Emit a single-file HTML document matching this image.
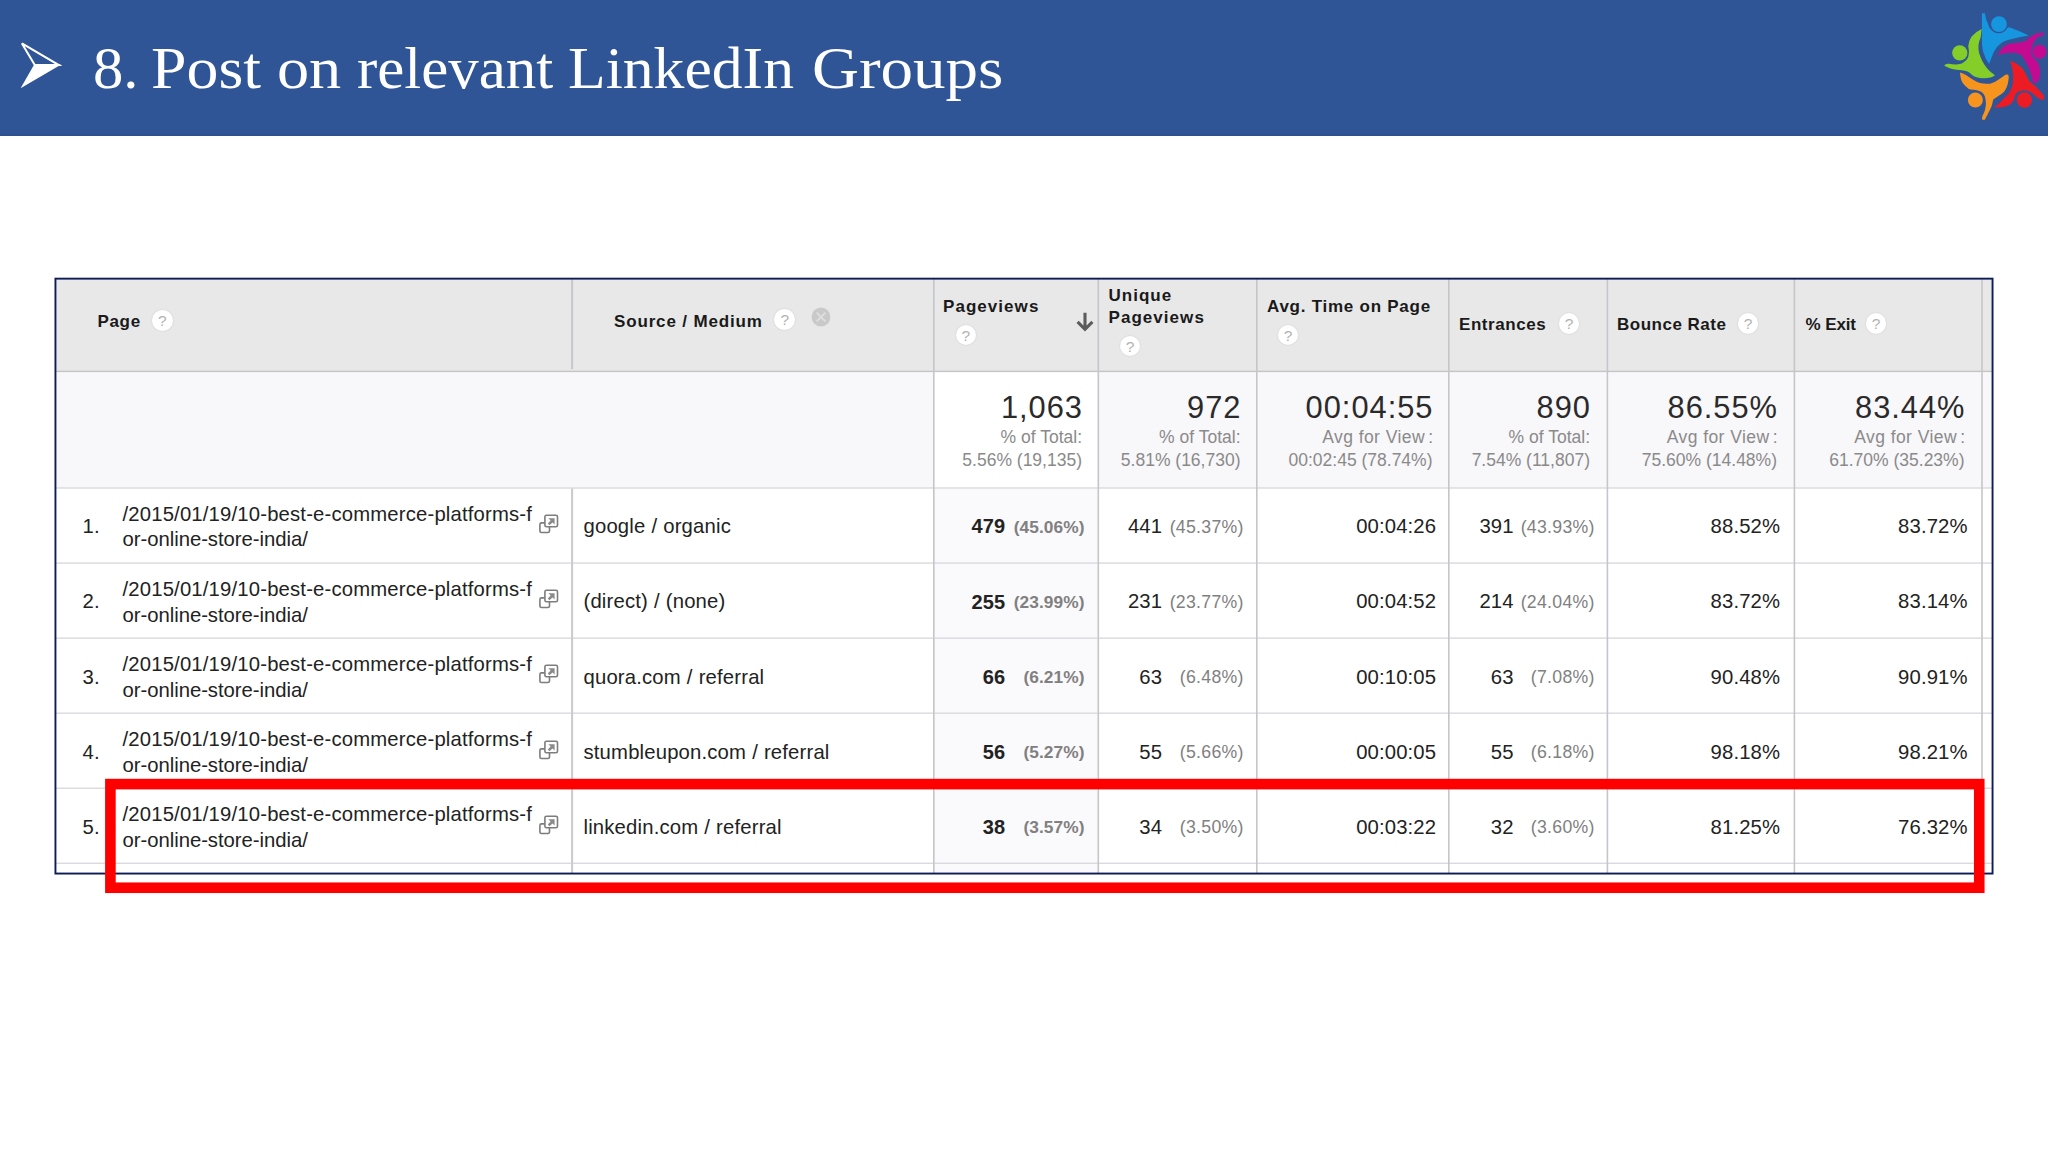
<!DOCTYPE html>
<html lang="en"><head><meta charset="utf-8"><title>8. Post on relevant LinkedIn Groups</title>
<style>
html,body{margin:0;padding:0;background:#fff}
body{width:2048px;height:1152px;position:relative;overflow:hidden;font-family:"Liberation Sans",Arial,sans-serif}
body>div,body>svg{position:absolute;white-space:nowrap}
.title{font-family:"Liberation Serif","Times New Roman",serif}
.title span{position:absolute;top:0;transform-origin:0 0;white-space:nowrap}
.h{font-weight:bold;color:#1a1a1a}
.d{color:#222}
.p{color:#808080}
.big{color:#2a2a2a}
.sub{color:#8a8a8a}
.q{border-radius:50%;background:#fff;color:#b2b2b2;font-size:15.5px;font-weight:normal;text-align:center;box-shadow:0 0 2px rgba(0,0,0,.13)}
</style></head><body>
<div style="left:0px;top:0px;width:2048px;height:136px;background:#2f5597;"></div>
<div style="left:0;top:133px;width:2048px;height:3px;background:linear-gradient(#2f5597,#2b4f8f)"></div>
<svg style="left:18px;top:38px" width="48" height="54" viewBox="18 38 48 54">
<polygon points="21.9,43.4 58.8,65.1 34.8,65.1" fill="none" stroke="#fff" stroke-width="2" stroke-linejoin="miter"/>
<polygon points="20.6,88.2 34.2,64.6 61.2,64.6" fill="#fff"/>
</svg>
<div class="title" style="left:0;top:34.16px;width:1100px;height:70px;font-size:58.5px;line-height:70px;color:#fff"><span style="left:93.1px;transform:scaleX(1.0368)">8.</span> <span style="left:151.4px;transform:scaleX(1.0909)">Post</span> <span style="left:276.6px;transform:scaleX(1.0982)">on</span> <span style="left:357.0px;transform:scaleX(1.0417)">relevant</span> <span style="left:568.4px;transform:scaleX(1.0538)">LinkedIn</span> <span style="left:812.0px;transform:scaleX(1.1113)">Groups</span></div>
<svg style="left:1936px;top:4px" width="112" height="124" viewBox="0 0 1041 1152">
<path fill="#1696de" d="M427,86 L454,86 Q462,150 498,223 Q530,268 580,270 Q630,268 665,215 Q700,215 723,233 Q800,262 861,292 Q780,305 723,321 Q665,335 625,351 Q585,375 567,400 Q540,435 527,469 Q508,520 493,557 Q455,505 437,440 Q425,390 427,331 Z"/>
<path fill="#85cd29" d="M424,233 Q420,275 415,312 Q398,350 395,380 Q392,420 400,454 Q412,495 429,527 Q470,610 548,662 Q520,688 440,690 Q370,690 330,655 Q300,622 240,616 Q140,612 76,574 Q90,550 120,556 Q190,570 240,552 Q285,530 300,490 Q312,440 300,390 Q305,340 331,302 Q370,258 424,233 Z"/>
<path fill="#f7941d" d="M223,637 Q250,645 282,662 Q310,682 341,701 Q375,722 410,735 Q455,745 503,740 Q545,730 576,706 Q615,680 645,657 L670,655 Q680,672 674,700 Q672,730 665,750 Q655,785 635,814 Q610,840 576,858 L532,887 Q525,920 518,946 Q500,990 478,1029 Q465,1055 454,1075 L429,1075 Q425,1060 432,1040 Q445,1015 454,990 Q462,960 464,931 Q464,890 454,858 Q445,830 420,815 Q390,800 356,797 Q325,800 305,790 Q270,765 248,735 Q228,705 223,637 Z"/>
<path fill="#ed1c24" d="M689,527 Q720,535 748,554 Q780,575 802,598 Q825,630 841,662 Q855,695 870,720 Q895,742 920,760 Q945,785 968,814 Q985,832 1003,853 L1003,887 Q985,892 968,887 Q945,870 920,853 Q895,825 870,814 Q835,800 802,804 Q765,812 743,833 Q730,855 725,885 Q715,910 699,926 Q665,950 625,956 Q585,962 540,962 Q590,925 625,882 Q665,850 689,814 Q708,775 714,735 Q718,685 714,637 Q708,580 689,527 Z"/>
<path fill="#c40a90" d="M1003,266 L1003,288 Q970,298 944,312 Q922,330 910,356 Q895,385 890,410 Q885,450 895,480 Q915,515 944,539 Q962,575 966,613 Q968,660 959,701 Q945,728 920,738 Q900,730 895,701 Q888,655 870,613 Q855,572 831,539 Q815,505 797,478 Q765,458 723,454 Q670,452 625,459 Q600,465 571,478 Q590,440 616,410 Q640,385 674,371 Q750,365 822,351 Q848,335 870,312 Q905,285 944,272 Q975,266 1003,266 Z"/>
<g fill="#2f5597"><circle cx="585" cy="187" r="85"/><circle cx="221" cy="454" r="82"/><circle cx="366" cy="892" r="81"/><circle cx="822" cy="892" r="82"/><circle cx="961" cy="444" r="77"/></g>
<circle cx="585" cy="187" r="73" fill="#1696de"/><circle cx="221" cy="454" r="71" fill="#85cd29"/><circle cx="366" cy="892" r="70" fill="#f7941d"/><circle cx="822" cy="892" r="71" fill="#ed1c24"/><circle cx="961" cy="444" r="66" fill="#c40a90"/>
</svg>
<div style="left:56px;top:279px;width:1936px;height:92px;background:#e8e8e8;"></div>
<div style="left:56px;top:372px;width:1936px;height:116px;background:#f8f7fa;"></div>
<div style="left:934px;top:372px;width:164px;height:116px;background:#ffffff;"></div>
<div style="left:56px;top:488px;width:1936px;height:385px;background:#ffffff;"></div>
<div style="left:934px;top:488px;width:164px;height:385px;background:#faf9fb;"></div>
<svg style="left:0;top:0" width="2048" height="900" viewBox="0 0 2048 900" shape-rendering="geometricPrecision">
<rect x="56" y="370.7" width="1936" height="1.4" fill="#c4c4c7"/>
<rect x="56" y="487.30" width="1936" height="1.4" fill="#dadade"/>
<rect x="56" y="562.36" width="1936" height="1.4" fill="#dadade"/>
<rect x="56" y="637.42" width="1936" height="1.4" fill="#dadade"/>
<rect x="56" y="712.48" width="1936" height="1.4" fill="#dadade"/>
<rect x="56" y="787.54" width="1936" height="1.4" fill="#dadade"/>
<rect x="56" y="862.60" width="1936" height="1.4" fill="#dadade"/>
<rect x="571.05" y="279" width="2.1" height="90" fill="#c8c8ca"/>
<rect x="571.05" y="488.5" width="2.1" height="384.5" fill="#ccccd0"/>
<rect x="933.00" y="279" width="1.6" height="594" fill="#c6c6ca"/>
<rect x="1097.50" y="279" width="1.6" height="594" fill="#c6c6ca"/>
<rect x="1256.00" y="279" width="1.6" height="594" fill="#c6c6ca"/>
<rect x="1448.00" y="279" width="1.6" height="594" fill="#c6c6ca"/>
<rect x="1606.60" y="279" width="1.6" height="594" fill="#c6c6ca"/>
<rect x="1793.60" y="279" width="1.6" height="594" fill="#c6c6ca"/>
<rect x="1981.20" y="279" width="1.6" height="594" fill="#c6c6ca"/>
<rect x="55.45" y="278.65" width="1937.1" height="594.9" fill="none" stroke="#0d1b57" stroke-width="1.9"/>
</svg>
<div class="h" style="top:311.71px;font-size:17px;line-height:20px;letter-spacing:0.65px;left:97.50px;">Page</div>
<div class="q" style="left:152.0px;top:310.2px;width:20.6px;height:20.6px;line-height:21.6px">?</div>
<div class="h" style="top:311.71px;font-size:17px;line-height:20px;letter-spacing:0.85px;left:614.00px;">Source / Medium</div>
<div class="q" style="left:774.4px;top:309.4px;width:20.6px;height:20.6px;line-height:21.6px">?</div>
<svg style="left:811px;top:306.5px" width="20" height="20" viewBox="0 0 20 20"><circle cx="10" cy="10" r="9.4" fill="#c9c9c9"/><path d="M6.2,6.2 L13.8,13.8 M13.8,6.2 L6.2,13.8" stroke="#dedede" stroke-width="1.9" stroke-linecap="round"/></svg>
<div class="h" style="top:296.51px;font-size:17px;line-height:20px;letter-spacing:1.05px;left:943.00px;">Pageviews</div>
<div class="q" style="left:955.5px;top:324.8px;width:20.6px;height:20.6px;line-height:21.6px">?</div>
<svg style="left:1070px;top:306px" width="30" height="30" viewBox="1070 306 30 30"><path d="M1085,312.8 V328.5 M1077.6,321.9 L1085,329.3 L1092.4,321.9" fill="none" stroke="#5c5c5c" stroke-width="3.1" stroke-linecap="butt" stroke-linejoin="miter"/></svg>
<div class="h" style="top:285.91px;font-size:17px;line-height:20px;letter-spacing:1.0px;left:1108.50px;">Unique</div>
<div class="h" style="top:307.91px;font-size:17px;line-height:20px;letter-spacing:1.05px;left:1108.50px;">Pageviews</div>
<div class="q" style="left:1119.7px;top:335.5px;width:20.6px;height:20.6px;line-height:21.6px">?</div>
<div class="h" style="top:296.51px;font-size:17px;line-height:20px;letter-spacing:0.75px;left:1267.00px;">Avg. Time on Page</div>
<div class="q" style="left:1277.7px;top:324.7px;width:20.6px;height:20.6px;line-height:21.6px">?</div>
<div class="h" style="top:314.81px;font-size:17px;line-height:20px;letter-spacing:0.55px;left:1459.00px;">Entrances</div>
<div class="q" style="left:1558.7px;top:313.3px;width:20.6px;height:20.6px;line-height:21.6px">?</div>
<div class="h" style="top:314.81px;font-size:17px;line-height:20px;letter-spacing:0.5px;left:1617.00px;">Bounce Rate</div>
<div class="q" style="left:1737.7px;top:313.3px;width:20.6px;height:20.6px;line-height:21.6px">?</div>
<div class="h" style="top:314.81px;font-size:17px;line-height:20px;letter-spacing:-0.1px;left:1805.50px;">% Exit</div>
<div class="q" style="left:1865.7px;top:313.3px;width:20.6px;height:20.6px;line-height:21.6px">?</div>
<div class="big" style="top:389.03px;font-size:30.8px;line-height:37px;letter-spacing:1.0px;right:965.00px;text-align:right;">1,063</div>
<div class="sub" style="top:427.04px;font-size:17.5px;line-height:21px;right:966.00px;text-align:right;">% of Total:</div>
<div class="sub" style="top:450.04px;font-size:17.5px;line-height:21px;right:966.00px;text-align:right;">5.56% (19,135)</div>
<div class="big" style="top:389.03px;font-size:30.8px;line-height:37px;letter-spacing:1.0px;right:806.50px;text-align:right;">972</div>
<div class="sub" style="top:427.04px;font-size:17.5px;line-height:21px;right:807.50px;text-align:right;">% of Total:</div>
<div class="sub" style="top:450.04px;font-size:17.5px;line-height:21px;right:807.50px;text-align:right;">5.81% (16,730)</div>
<div class="big" style="top:389.03px;font-size:30.8px;line-height:37px;letter-spacing:1.0px;right:614.50px;text-align:right;">00:04:55</div>
<div class="sub" style="top:427.04px;font-size:17.5px;line-height:21px;letter-spacing:0.45px;right:614.55px;text-align:right;">Avg for View<span style="margin-left:3px">:</span></div>
<div class="sub" style="top:450.04px;font-size:17.5px;line-height:21px;right:615.50px;text-align:right;">00:02:45 (78.74%)</div>
<div class="big" style="top:389.03px;font-size:30.8px;line-height:37px;letter-spacing:1.0px;right:457.00px;text-align:right;">890</div>
<div class="sub" style="top:427.04px;font-size:17.5px;line-height:21px;right:458.00px;text-align:right;">% of Total:</div>
<div class="sub" style="top:450.04px;font-size:17.5px;line-height:21px;right:458.00px;text-align:right;">7.54% (11,807)</div>
<div class="big" style="top:389.03px;font-size:30.8px;line-height:37px;letter-spacing:1.0px;right:270.00px;text-align:right;">86.55%</div>
<div class="sub" style="top:427.04px;font-size:17.5px;line-height:21px;letter-spacing:0.45px;right:270.05px;text-align:right;">Avg for View<span style="margin-left:3px">:</span></div>
<div class="sub" style="top:450.04px;font-size:17.5px;line-height:21px;right:271.00px;text-align:right;">75.60% (14.48%)</div>
<div class="big" style="top:389.03px;font-size:30.8px;line-height:37px;letter-spacing:1.0px;right:82.50px;text-align:right;">83.44%</div>
<div class="sub" style="top:427.04px;font-size:17.5px;line-height:21px;letter-spacing:0.45px;right:82.55px;text-align:right;">Avg for View<span style="margin-left:3px">:</span></div>
<div class="sub" style="top:450.04px;font-size:17.5px;line-height:21px;right:83.50px;text-align:right;">61.70% (35.23%)</div>
<div class="d" style="top:514.37px;font-size:20.3px;line-height:24px;letter-spacing:0.12px;left:82.50px;">1.</div>
<div class="d" style="top:501.67px;font-size:20.3px;line-height:24px;letter-spacing:0.17px;left:122.50px;">/2015/01/19/10-best-e-commerce-platforms-f</div>
<div class="d" style="top:527.47px;font-size:20.3px;line-height:24px;letter-spacing:-0.03px;left:122.50px;">or-online-store-india/</div>
<svg style="left:538px;top:514.2px" width="22" height="21" viewBox="0 0 22 21"><rect x="1.9" y="8.9" width="9.6" height="9.6" rx="1.6" fill="#fff" stroke="#7d7d7d" stroke-width="1.6"/><rect x="6.9" y="1.2" width="12.6" height="11.6" rx="1.6" fill="#fff" stroke="#7d7d7d" stroke-width="1.6"/><path d="M10.4,4.2 H16.6 V10.4 L14.6,8.4 L11.4,11.2 L9.8,9.6 L12.6,6.4 Z" fill="#8a8a8a"/></svg>
<div class="d" style="top:514.37px;font-size:20.3px;line-height:24px;letter-spacing:0.17px;left:583.50px;word-spacing:0.2px;">google / organic</div>
<div class="d" style="top:514.47px;font-size:20px;line-height:24px;letter-spacing:0.1px;font-weight:bold;right:1042.90px;text-align:right;">479</div>
<div class="p" style="top:516.91px;font-size:17.3px;line-height:21px;letter-spacing:0.1px;font-weight:bold;right:963.40px;text-align:right;">(45.06%)</div>
<div class="d" style="top:514.37px;font-size:20.3px;line-height:24px;letter-spacing:0.12px;right:885.88px;text-align:right;">441</div>
<div class="p" style="top:516.77px;font-size:17.7px;line-height:21px;letter-spacing:0.3px;right:804.20px;text-align:right;">(45.37%)</div>
<div class="d" style="top:514.37px;font-size:20.3px;line-height:24px;letter-spacing:0.12px;right:611.88px;text-align:right;">00:04:26</div>
<div class="d" style="top:514.37px;font-size:20.3px;line-height:24px;letter-spacing:0.12px;right:534.38px;text-align:right;">391</div>
<div class="p" style="top:516.77px;font-size:17.7px;line-height:21px;letter-spacing:0.3px;right:453.20px;text-align:right;">(43.93%)</div>
<div class="d" style="top:514.37px;font-size:20.3px;line-height:24px;letter-spacing:0.12px;right:267.88px;text-align:right;">88.52%</div>
<div class="d" style="top:514.37px;font-size:20.3px;line-height:24px;letter-spacing:0.12px;right:80.38px;text-align:right;">83.72%</div>
<div class="d" style="top:589.47px;font-size:20.3px;line-height:24px;letter-spacing:0.12px;left:82.50px;">2.</div>
<div class="d" style="top:576.77px;font-size:20.3px;line-height:24px;letter-spacing:0.17px;left:122.50px;">/2015/01/19/10-best-e-commerce-platforms-f</div>
<div class="d" style="top:602.57px;font-size:20.3px;line-height:24px;letter-spacing:-0.03px;left:122.50px;">or-online-store-india/</div>
<svg style="left:538px;top:589.3px" width="22" height="21" viewBox="0 0 22 21"><rect x="1.9" y="8.9" width="9.6" height="9.6" rx="1.6" fill="#fff" stroke="#7d7d7d" stroke-width="1.6"/><rect x="6.9" y="1.2" width="12.6" height="11.6" rx="1.6" fill="#fff" stroke="#7d7d7d" stroke-width="1.6"/><path d="M10.4,4.2 H16.6 V10.4 L14.6,8.4 L11.4,11.2 L9.8,9.6 L12.6,6.4 Z" fill="#8a8a8a"/></svg>
<div class="d" style="top:589.47px;font-size:20.3px;line-height:24px;letter-spacing:0.17px;left:583.50px;word-spacing:0.2px;">(direct) / (none)</div>
<div class="d" style="top:589.57px;font-size:20px;line-height:24px;letter-spacing:0.1px;font-weight:bold;right:1042.90px;text-align:right;">255</div>
<div class="p" style="top:592.01px;font-size:17.3px;line-height:21px;letter-spacing:0.1px;font-weight:bold;right:963.40px;text-align:right;">(23.99%)</div>
<div class="d" style="top:589.47px;font-size:20.3px;line-height:24px;letter-spacing:0.12px;right:885.88px;text-align:right;">231</div>
<div class="p" style="top:591.87px;font-size:17.7px;line-height:21px;letter-spacing:0.3px;right:804.20px;text-align:right;">(23.77%)</div>
<div class="d" style="top:589.47px;font-size:20.3px;line-height:24px;letter-spacing:0.12px;right:611.88px;text-align:right;">00:04:52</div>
<div class="d" style="top:589.47px;font-size:20.3px;line-height:24px;letter-spacing:0.12px;right:534.38px;text-align:right;">214</div>
<div class="p" style="top:591.87px;font-size:17.7px;line-height:21px;letter-spacing:0.3px;right:453.20px;text-align:right;">(24.04%)</div>
<div class="d" style="top:589.47px;font-size:20.3px;line-height:24px;letter-spacing:0.12px;right:267.88px;text-align:right;">83.72%</div>
<div class="d" style="top:589.47px;font-size:20.3px;line-height:24px;letter-spacing:0.12px;right:80.38px;text-align:right;">83.14%</div>
<div class="d" style="top:664.57px;font-size:20.3px;line-height:24px;letter-spacing:0.12px;left:82.50px;">3.</div>
<div class="d" style="top:651.87px;font-size:20.3px;line-height:24px;letter-spacing:0.17px;left:122.50px;">/2015/01/19/10-best-e-commerce-platforms-f</div>
<div class="d" style="top:677.67px;font-size:20.3px;line-height:24px;letter-spacing:-0.03px;left:122.50px;">or-online-store-india/</div>
<svg style="left:538px;top:664.4px" width="22" height="21" viewBox="0 0 22 21"><rect x="1.9" y="8.9" width="9.6" height="9.6" rx="1.6" fill="#fff" stroke="#7d7d7d" stroke-width="1.6"/><rect x="6.9" y="1.2" width="12.6" height="11.6" rx="1.6" fill="#fff" stroke="#7d7d7d" stroke-width="1.6"/><path d="M10.4,4.2 H16.6 V10.4 L14.6,8.4 L11.4,11.2 L9.8,9.6 L12.6,6.4 Z" fill="#8a8a8a"/></svg>
<div class="d" style="top:664.57px;font-size:20.3px;line-height:24px;letter-spacing:0.17px;left:583.50px;word-spacing:0.2px;">quora.com / referral</div>
<div class="d" style="top:664.67px;font-size:20px;line-height:24px;letter-spacing:0.1px;font-weight:bold;right:1042.90px;text-align:right;">66</div>
<div class="p" style="top:667.11px;font-size:17.3px;line-height:21px;letter-spacing:0.1px;font-weight:bold;right:963.40px;text-align:right;">(6.21%)</div>
<div class="d" style="top:664.57px;font-size:20.3px;line-height:24px;letter-spacing:0.12px;right:885.88px;text-align:right;">63</div>
<div class="p" style="top:666.97px;font-size:17.7px;line-height:21px;letter-spacing:0.3px;right:804.20px;text-align:right;">(6.48%)</div>
<div class="d" style="top:664.57px;font-size:20.3px;line-height:24px;letter-spacing:0.12px;right:611.88px;text-align:right;">00:10:05</div>
<div class="d" style="top:664.57px;font-size:20.3px;line-height:24px;letter-spacing:0.12px;right:534.38px;text-align:right;">63</div>
<div class="p" style="top:666.97px;font-size:17.7px;line-height:21px;letter-spacing:0.3px;right:453.20px;text-align:right;">(7.08%)</div>
<div class="d" style="top:664.57px;font-size:20.3px;line-height:24px;letter-spacing:0.12px;right:267.88px;text-align:right;">90.48%</div>
<div class="d" style="top:664.57px;font-size:20.3px;line-height:24px;letter-spacing:0.12px;right:80.38px;text-align:right;">90.91%</div>
<div class="d" style="top:739.67px;font-size:20.3px;line-height:24px;letter-spacing:0.12px;left:82.50px;">4.</div>
<div class="d" style="top:726.97px;font-size:20.3px;line-height:24px;letter-spacing:0.17px;left:122.50px;">/2015/01/19/10-best-e-commerce-platforms-f</div>
<div class="d" style="top:752.77px;font-size:20.3px;line-height:24px;letter-spacing:-0.03px;left:122.50px;">or-online-store-india/</div>
<svg style="left:538px;top:739.5px" width="22" height="21" viewBox="0 0 22 21"><rect x="1.9" y="8.9" width="9.6" height="9.6" rx="1.6" fill="#fff" stroke="#7d7d7d" stroke-width="1.6"/><rect x="6.9" y="1.2" width="12.6" height="11.6" rx="1.6" fill="#fff" stroke="#7d7d7d" stroke-width="1.6"/><path d="M10.4,4.2 H16.6 V10.4 L14.6,8.4 L11.4,11.2 L9.8,9.6 L12.6,6.4 Z" fill="#8a8a8a"/></svg>
<div class="d" style="top:739.67px;font-size:20.3px;line-height:24px;letter-spacing:0.17px;left:583.50px;word-spacing:0.2px;">stumbleupon.com / referral</div>
<div class="d" style="top:739.77px;font-size:20px;line-height:24px;letter-spacing:0.1px;font-weight:bold;right:1042.90px;text-align:right;">56</div>
<div class="p" style="top:742.21px;font-size:17.3px;line-height:21px;letter-spacing:0.1px;font-weight:bold;right:963.40px;text-align:right;">(5.27%)</div>
<div class="d" style="top:739.67px;font-size:20.3px;line-height:24px;letter-spacing:0.12px;right:885.88px;text-align:right;">55</div>
<div class="p" style="top:742.07px;font-size:17.7px;line-height:21px;letter-spacing:0.3px;right:804.20px;text-align:right;">(5.66%)</div>
<div class="d" style="top:739.67px;font-size:20.3px;line-height:24px;letter-spacing:0.12px;right:611.88px;text-align:right;">00:00:05</div>
<div class="d" style="top:739.67px;font-size:20.3px;line-height:24px;letter-spacing:0.12px;right:534.38px;text-align:right;">55</div>
<div class="p" style="top:742.07px;font-size:17.7px;line-height:21px;letter-spacing:0.3px;right:453.20px;text-align:right;">(6.18%)</div>
<div class="d" style="top:739.67px;font-size:20.3px;line-height:24px;letter-spacing:0.12px;right:267.88px;text-align:right;">98.18%</div>
<div class="d" style="top:739.67px;font-size:20.3px;line-height:24px;letter-spacing:0.12px;right:80.38px;text-align:right;">98.21%</div>
<div class="d" style="top:814.77px;font-size:20.3px;line-height:24px;letter-spacing:0.12px;left:82.50px;">5.</div>
<div class="d" style="top:802.07px;font-size:20.3px;line-height:24px;letter-spacing:0.17px;left:122.50px;">/2015/01/19/10-best-e-commerce-platforms-f</div>
<div class="d" style="top:827.87px;font-size:20.3px;line-height:24px;letter-spacing:-0.03px;left:122.50px;">or-online-store-india/</div>
<svg style="left:538px;top:814.6px" width="22" height="21" viewBox="0 0 22 21"><rect x="1.9" y="8.9" width="9.6" height="9.6" rx="1.6" fill="#fff" stroke="#7d7d7d" stroke-width="1.6"/><rect x="6.9" y="1.2" width="12.6" height="11.6" rx="1.6" fill="#fff" stroke="#7d7d7d" stroke-width="1.6"/><path d="M10.4,4.2 H16.6 V10.4 L14.6,8.4 L11.4,11.2 L9.8,9.6 L12.6,6.4 Z" fill="#8a8a8a"/></svg>
<div class="d" style="top:814.77px;font-size:20.3px;line-height:24px;letter-spacing:0.17px;left:583.50px;word-spacing:0.2px;">linkedin.com / referral</div>
<div class="d" style="top:814.87px;font-size:20px;line-height:24px;letter-spacing:0.1px;font-weight:bold;right:1042.90px;text-align:right;">38</div>
<div class="p" style="top:817.31px;font-size:17.3px;line-height:21px;letter-spacing:0.1px;font-weight:bold;right:963.40px;text-align:right;">(3.57%)</div>
<div class="d" style="top:814.77px;font-size:20.3px;line-height:24px;letter-spacing:0.12px;right:885.88px;text-align:right;">34</div>
<div class="p" style="top:817.17px;font-size:17.7px;line-height:21px;letter-spacing:0.3px;right:804.20px;text-align:right;">(3.50%)</div>
<div class="d" style="top:814.77px;font-size:20.3px;line-height:24px;letter-spacing:0.12px;right:611.88px;text-align:right;">00:03:22</div>
<div class="d" style="top:814.77px;font-size:20.3px;line-height:24px;letter-spacing:0.12px;right:534.38px;text-align:right;">32</div>
<div class="p" style="top:817.17px;font-size:17.7px;line-height:21px;letter-spacing:0.3px;right:453.20px;text-align:right;">(3.60%)</div>
<div class="d" style="top:814.77px;font-size:20.3px;line-height:24px;letter-spacing:0.12px;right:267.88px;text-align:right;">81.25%</div>
<div class="d" style="top:814.77px;font-size:20.3px;line-height:24px;letter-spacing:0.12px;right:80.38px;text-align:right;">76.32%</div>
<svg style="left:95px;top:770px" width="1900" height="132" viewBox="95 770 1900 132"><rect x="110.4" y="784.1" width="1868.85" height="103.65" fill="none" stroke="#fe0000" stroke-width="10.6"/></svg>
</body></html>
